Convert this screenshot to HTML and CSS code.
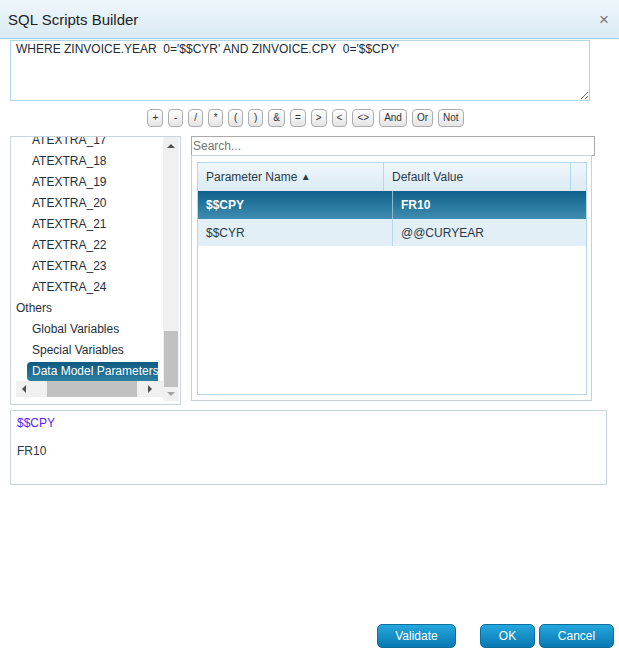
FILE: index.html
```html
<!DOCTYPE html>
<html>
<head>
<meta charset="utf-8">
<title>SQL Scripts Builder</title>
<link rel="stylesheet" href="styles.css">
</head>
<body>
<div class="titlebar">
  <span class="title">SQL Scripts Builder</span>
  <span class="close">×</span>
</div>
<div class="main">
  <textarea class="sql" spellcheck="false">WHERE ZINVOICE.YEAR  0='$$CYR' AND ZINVOICE.CPY  0='$$CPY'</textarea>
  <div class="ops">
    <button class="op">+</button><button class="op">-</button><button class="op">/</button><button class="op">*</button><button class="op">(</button><button class="op">)</button><button class="op">&amp;</button><button class="op">=</button><button class="op">&gt;</button><button class="op">&lt;</button><button class="op">&lt;&gt;</button><button class="op">And</button><button class="op">Or</button><button class="op">Not</button>
  </div>
  <div class="work">
    <div class="tree">
      <div class="tree-view">
        <div class="tree-list">
          <ul class="items">
            <li class="item">ATEXTRA_17</li>
            <li class="item">ATEXTRA_18</li>
            <li class="item">ATEXTRA_19</li>
            <li class="item">ATEXTRA_20</li>
            <li class="item">ATEXTRA_21</li>
            <li class="item">ATEXTRA_22</li>
            <li class="item">ATEXTRA_23</li>
            <li class="item">ATEXTRA_24</li>
            <li class="item group">Others</li>
            <li class="item">Global Variables</li>
            <li class="item">Special Variables</li>
            <li class="item"><span class="sel">Data Model Parameters</span></li>
          </ul>
        </div>
        <div class="hscroll">
          <span class="arr"><span class="tri-left"></span></span>
          <span class="hthumb"></span>
          <span class="hspace"></span>
          <span class="arr"><span class="tri-right"></span></span>
        </div>
      </div>
      <div class="vscroll">
        <span class="varr top"><span class="tri-up"></span></span>
        <span class="vthumb"></span>
        <span class="varr bottom"><span class="tri-down"></span></span>
      </div>
    </div>
    <div class="right">
      <input class="search" type="text" placeholder="Search...">
      <div class="grid-wrap">
        <div class="grid">
          <div class="ghead">
            <div class="hc c1">Parameter Name <span class="sort">▲</span></div>
            <div class="hc c2">Default Value</div>
            <div class="hc c3"></div>
          </div>
          <div class="grow selected">
            <div class="rc r1">$$CPY</div>
            <div class="rc r2">FR10</div>
          </div>
          <div class="grow alt">
            <div class="rc r1">$$CYR</div>
            <div class="rc r2">@@CURYEAR</div>
          </div>
        </div>
      </div>
    </div>
  </div>
  <div class="info">
    <div class="info-name">$$CPY</div>
    <div class="info-value">FR10</div>
  </div>
</div>
<div class="footer">
  <button class="btn validate">Validate</button>
  <button class="btn ok">OK</button>
  <button class="btn cancel">Cancel</button>
</div>
</body>
</html>
```
FILE: styles.css
```css
* { box-sizing: border-box; }
html, body { margin: 0; padding: 0; }
body {
  width: 619px;
  height: 659px;
  overflow: hidden;
  font-family: "Liberation Sans", Arial, sans-serif;
  font-size: 12px;
  color: #1e2b36;
  background: #fff;
  display: flex;
  flex-direction: column;
}
.titlebar {
  height: 39px;
  flex: none;
  border-bottom: 1px solid #a3cfe6;
  background: linear-gradient(#eef6fb, #dbeaf4);
  display: flex;
  align-items: center;
  justify-content: space-between;
  padding: 0 10px 0 8px;
}
.title { font-size: 15px; color: #222; }
.close { font-size: 17px; color: #777; line-height: 1; }

.main {
  display: flex;
  flex-direction: column;
  padding: 1px 10px 0 10px;
}
.sql {
  display: block;
  width: 580px;
  height: 61px;
  border: 1px solid #b3d7e8;
  padding: 1px 5px;
  font-family: "Liberation Sans", Arial, sans-serif;
  font-size: 12px;
  color: #1e2b36;
  resize: both;
  outline: none;
  margin: 0;
}
.ops {
  display: flex;
  justify-content: center;
  gap: 5px;
  margin-top: 8px;
  padding-right: 8px;
  height: 18px;
}
.op {
  height: 18px;
  min-width: 15px;
  padding: 0 4px;
  border: 1px solid #adadad;
  border-radius: 4px;
  background: linear-gradient(#ffffff, #e4e4e4);
  font-family: "Liberation Sans", Arial, sans-serif;
  font-size: 10px;
  color: #333;
  line-height: 16px;
  margin: 0;
}

.work {
  display: flex;
  gap: 10px;
  margin-top: 9px;
  height: 269px;
}
.tree {
  width: 171px;
  flex: none;
  border: 1px solid #c9d4db;
  display: flex;
}
.tree-view {
  flex: 1;
  min-width: 0;
  display: flex;
  flex-direction: column;
}
.tree-list {
  flex: 1;
  overflow: hidden;
  margin-right: 5px;
}
.items {
  list-style: none;
  margin: -7px 0 0 0;
  padding: 0;
}
.item {
  height: 21px;
  line-height: 21px;
  padding-left: 21px;
  white-space: nowrap;
  color: #1e2f3c;
}
.item.group { padding-left: 5px; }
.sel {
  display: inline-block;
  height: 19px;
  line-height: 19px;
  margin-left: -5px;
  padding: 0 6px 0 5px;
  border-radius: 4px;
  background: linear-gradient(#0f5a80, #2c7fa3);
  color: #fff;
  vertical-align: top;
  margin-top: 1px;
}
.hscroll {
  height: 16px;
  margin: 0 0 7px 5px;
  width: 147px;
  background: #f0f0f0;
  display: flex;
  align-items: center;
}
.arr {
  width: 16px;
  height: 16px;
  display: flex;
  align-items: center;
  justify-content: center;
}
.hthumb {
  width: 90px;
  height: 16px;
  margin-left: 15px;
  background: #c1c1c1;
}
.hspace { width: 5px; }
.hscroll .arr:last-child { margin-right: 5px; }
.tri-left { width: 0; height: 0; border-top: 4px solid transparent; border-bottom: 4px solid transparent; border-right: 4px solid #505050; }
.tri-right { width: 0; height: 0; border-top: 4px solid transparent; border-bottom: 4px solid transparent; border-left: 4px solid #505050; }
.tri-up { width: 0; height: 0; border-left: 4px solid transparent; border-right: 4px solid transparent; border-bottom: 4px solid #505050; }
.tri-down { width: 0; height: 0; border-left: 4px solid transparent; border-right: 4px solid transparent; border-top: 4px solid #a3a3a3; }
.vscroll {
  width: 16px;
  flex: none;
  margin: 0 1px 3px 0;
  background: #f0f0f0;
  display: flex;
  flex-direction: column;
  align-items: center;
}
.varr {
  width: 16px;
  display: flex;
  align-items: center;
  justify-content: center;
}
.varr.top { height: 17px; }
.vthumb {
  width: 14px;
  height: 56px;
  margin-top: 177px;
  background: #c1c1c1;
}
.varr.bottom { flex: 1; }

.right {
  flex: 1;
  display: flex;
  flex-direction: column;
}
.search {
  width: 404px;
  height: 20px;
  border: 1px solid #a9a9a9;
  padding: 0 1px;
  margin: 0;
  font-family: "Liberation Sans", Arial, sans-serif;
  font-size: 12px;
  color: #333;
  outline: none;
}
.search::placeholder { color: #757575; }
.grid-wrap {
  width: 401px;
  height: 246px;
  margin-top: -1px;
  border: 1px solid #c9d0d6;
  padding: 6px 4px 5px 5px;
}
.grid {
  height: 100%;
  border: 1px solid #b7d8ea;
  display: flex;
  flex-direction: column;
}
.ghead {
  height: 28px;
  display: flex;
  background: linear-gradient(#eff7fc, #dbeaf4);
  color: #2a3a46;
}
.hc {
  line-height: 29px;
  padding-left: 8px;
  white-space: nowrap;
}
.hc.c1 { width: 186px; border-right: 1px solid #b7d8ea; }
.hc.c2 { width: 187px; border-right: 1px solid #b7d8ea; }
.hc.c3 { flex: 1; }
.sort { font-size: 10px; position: relative; top: -1px; }
.grow {
  height: 28px;
  display: flex;
}
.grow.alt { height: 27px; background: #e2eff7; color: #2a3a46; }
.grow.selected {
  background: linear-gradient(#10608a, #3f8db0);
  color: #fff;
  font-weight: bold;
}
.rc {
  line-height: 29px;
  padding-left: 8px;
  white-space: nowrap;
}
.grow.alt .rc { line-height: 28px; }
.rc.r1 { width: 194px; }
.rc.r2 { flex: 1; border-left: 1px solid #b7d8ea; }
.grow.selected .rc.r2 { border-left-color: #8fb9cf; }

.info {
  margin-top: 5px;
  width: 597px;
  height: 75px;
  border: 1px solid #c9d4db;
  padding: 5px 6px;
}
.info-name { color: #5a1ff0; line-height: 14px; }
.info-value { color: #2a3a46; line-height: 14px; margin-top: 14px; }

.footer {
  margin-top: auto;
  display: flex;
  justify-content: flex-end;
  padding: 0 5px 11px 0;
}
.btn {
  height: 24px;
  border: 1px solid #0b6f9f;
  border-radius: 5px;
  background: linear-gradient(#25a7dd, #0878b2);
  color: #fff;
  font-family: "Liberation Sans", Arial, sans-serif;
  font-size: 12px;
  padding: 0;
  margin: 0;
}
.validate { width: 79px; margin-right: 24px; }
.ok { width: 55px; margin-right: 4px; }
.cancel { width: 75px; }
```
